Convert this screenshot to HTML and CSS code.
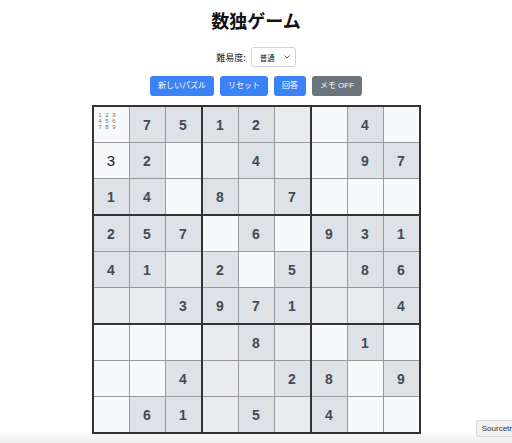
FILE: index.html
```html
<!DOCTYPE html>
<html lang="ja">
<head>
<meta charset="utf-8">
<title>数独ゲーム</title>
<link rel="stylesheet" href="styles.css">
</head>
<body>
<div class="app">
  <h1 class="title">数独ゲーム</h1>
  <div class="difficulty">
    <label class="diff-label">難易度:</label>
    <span class="select-wrap">
      <select class="select"><option>普通</option></select>
      <svg class="chev" width="6" height="4" viewBox="0 0 6 4"><path d="M0.5 0.5 L3 3 L5.5 0.5" fill="none" stroke="#444" stroke-width="0.9"/></svg>
    </span>
  </div>
  <div class="buttons">
    <button class="btn">新しいパズル</button>
    <button class="btn">リセット</button>
    <button class="btn">回答</button>
    <button class="btn btn-gray">メモ OFF</button>
  </div>
  <div class="board">
    <div class="box">
      <div class="cell memo-cell"><div class="memo"><span>1</span><span>2</span><span>3</span><span>4</span><span>5</span><span>6</span><span>7</span><span>8</span><span>9</span></div></div>
      <div class="cell given">7</div>
      <div class="cell given">5</div>
      <div class="cell user">3</div>
      <div class="cell given">2</div>
      <div class="cell"></div>
      <div class="cell given">1</div>
      <div class="cell given">4</div>
      <div class="cell"></div>
    </div>
    <div class="box alt">
      <div class="cell given">1</div>
      <div class="cell given">2</div>
      <div class="cell"></div>
      <div class="cell"></div>
      <div class="cell given">4</div>
      <div class="cell"></div>
      <div class="cell given">8</div>
      <div class="cell"></div>
      <div class="cell given">7</div>
    </div>
    <div class="box">
      <div class="cell"></div>
      <div class="cell given">4</div>
      <div class="cell"></div>
      <div class="cell"></div>
      <div class="cell given">9</div>
      <div class="cell given">7</div>
      <div class="cell"></div>
      <div class="cell"></div>
      <div class="cell"></div>
    </div>
    <div class="box alt">
      <div class="cell given">2</div>
      <div class="cell given">5</div>
      <div class="cell given">7</div>
      <div class="cell given">4</div>
      <div class="cell given">1</div>
      <div class="cell"></div>
      <div class="cell"></div>
      <div class="cell"></div>
      <div class="cell given">3</div>
    </div>
    <div class="box">
      <div class="cell"></div>
      <div class="cell given">6</div>
      <div class="cell"></div>
      <div class="cell given">2</div>
      <div class="cell"></div>
      <div class="cell given">5</div>
      <div class="cell given">9</div>
      <div class="cell given">7</div>
      <div class="cell given">1</div>
    </div>
    <div class="box alt">
      <div class="cell given">9</div>
      <div class="cell given">3</div>
      <div class="cell given">1</div>
      <div class="cell"></div>
      <div class="cell given">8</div>
      <div class="cell given">6</div>
      <div class="cell"></div>
      <div class="cell"></div>
      <div class="cell given">4</div>
    </div>
    <div class="box">
      <div class="cell"></div>
      <div class="cell"></div>
      <div class="cell"></div>
      <div class="cell"></div>
      <div class="cell"></div>
      <div class="cell given">4</div>
      <div class="cell"></div>
      <div class="cell given">6</div>
      <div class="cell given">1</div>
    </div>
    <div class="box alt">
      <div class="cell"></div>
      <div class="cell given">8</div>
      <div class="cell"></div>
      <div class="cell"></div>
      <div class="cell"></div>
      <div class="cell given">2</div>
      <div class="cell"></div>
      <div class="cell given">5</div>
      <div class="cell"></div>
    </div>
    <div class="box">
      <div class="cell"></div>
      <div class="cell given">1</div>
      <div class="cell"></div>
      <div class="cell given">8</div>
      <div class="cell"></div>
      <div class="cell given">9</div>
      <div class="cell given">4</div>
      <div class="cell"></div>
      <div class="cell"></div>
    </div>
  </div>
</div>
<div class="bottom-shade"></div>
<div class="tooltip">Sourcetr</div>
</body>
</html>
```

FILE: styles.css
```css
html, body {
  margin: 0;
  padding: 0;
  background: #ffffff;
}

body {
  font-family: "Liberation Sans", "Noto Sans CJK JP", sans-serif;
  color: #222;
}

.app {
  display: flex;
  flex-direction: column;
  align-items: center;
  padding-top: 8px;
}

.title {
  margin: 0;
  font-family: "Noto Sans CJK JP", sans-serif;
  font-size: 18px;
  line-height: 24px;
  font-weight: 700;
  color: #111;
}

.difficulty {
  margin-top: 15px;
  display: flex;
  align-items: center;
  gap: 5px;
  height: 20px;
}

.diff-label {
  font-family: "Noto Sans CJK JP", sans-serif;
  font-size: 9px;
  color: #222;
}

.select-wrap {
  position: relative;
  display: block;
}

.select {
  appearance: none;
  -webkit-appearance: none;
  display: block;
  width: 45px;
  height: 20px;
  margin: 0;
  padding: 0 0 0 8px;
  border: 1px solid #cfd3d8;
  border-radius: 3px;
  background: #fff;
  font-family: "Noto Sans CJK JP", sans-serif;
  font-size: 7.5px;
  color: #222;
}

.chev {
  position: absolute;
  right: 6px;
  top: 8px;
}

.buttons {
  margin-top: 9px;
  display: flex;
  gap: 6px;
}

.btn {
  height: 20px;
  margin: 0;
  padding: 0 8px;
  border: none;
  border-radius: 3px;
  background: #3b82f6;
  color: #fff;
  font-family: "Liberation Sans", "Noto Sans CJK JP", sans-serif;
  font-size: 8px;
  line-height: 20px;
}

.btn-gray {
  background: #6c757d;
}

.board {
  margin-top: 9px;
  display: grid;
  grid-template-columns: repeat(3, auto);
  gap: 2px;
  background: #333;
  border: 2px solid #333;
}

.box {
  display: grid;
  grid-template-columns: repeat(3, 35px);
  grid-template-rows: repeat(3, 35px);
  gap: 1px;
  background: #9a9a9a;
}

.cell {
  display: flex;
  align-items: center;
  justify-content: center;
  background: #f8f9fa;
  font-family: "Liberation Sans", sans-serif;
  font-size: 14px;
}

.box.alt .cell {
  background: #e9ebee;
}

.cell.given,
.box.alt .cell.given {
  background: #dee1e5;
  color: #454b52;
  font-weight: 700;
}

.cell.user {
  color: #1a1a1a;
  font-weight: 400;
  font-size: 15px;
}

.memo-cell {
  align-items: flex-start;
  justify-content: flex-start;
}

.memo {
  display: grid;
  grid-template-columns: repeat(3, 7px);
  grid-template-rows: repeat(3, 6px);
  padding: 5px 0 0 3px;
  font-size: 6px;
  line-height: 6px;
  color: #6c737a;
  text-align: center;
}

.bottom-shade {
  position: fixed;
  left: 0;
  right: 0;
  bottom: 0;
  height: 11px;
  background: linear-gradient(to bottom, rgba(0,0,0,0), rgba(0,0,0,0.08));
}

.tooltip {
  position: fixed;
  right: -6px;
  bottom: 6px;
  padding: 2px 5px;
  font-family: "Liberation Sans", sans-serif;
  font-size: 8px;
  line-height: 11px;
  color: #333;
  background: #f1f1f1;
  border: 1px solid #d8d8d8;
  border-radius: 2px;
}
```
